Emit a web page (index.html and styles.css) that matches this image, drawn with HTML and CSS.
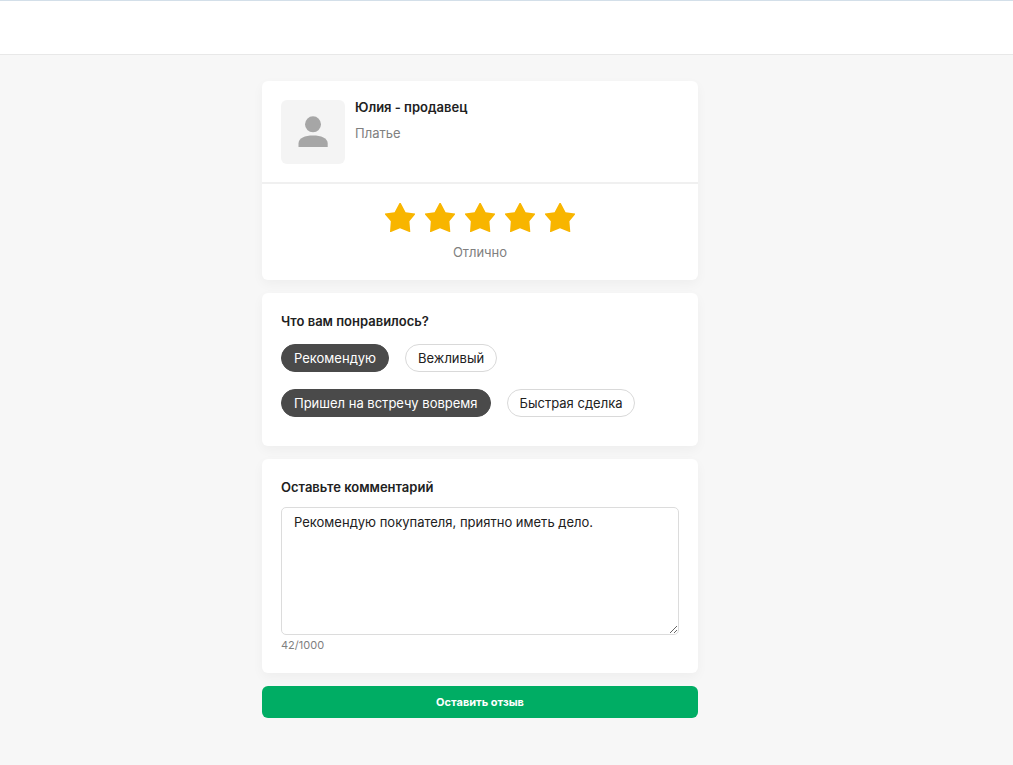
FILE: index.html
```html
<!DOCTYPE html>
<html lang="ru">
<head>
<meta charset="utf-8">
<meta name="viewport" content="width=device-width, initial-scale=1">
<title>Оставить отзыв</title>
<link rel="stylesheet" href="styles.css">
</head>
<body>
<svg class="sprite" aria-hidden="true">
  <symbol id="star" viewBox="0 0 30 30"><path d="M14.500 0h1.200L20.600 9.200 30 10.400v1.200L24.400 18.200 25.300 29h-1L15 25.300 6 29H5L5.800 18.200 0 11.600v-1.200L9.600 9.200Z"/></symbol>
</svg>
<header class="topbar"></header>
<main class="page">
  <form class="review">
    <section class="card">
      <div class="seller">
        <div class="avatar">
          <svg viewBox="0 0 64 64" aria-hidden="true"><circle cx="32" cy="24.300" r="8"/><path d="M17.500 47v-3.500C17.500 38 24 35.500 32 35.500s14.700 2.500 14.700 8V47Z"/></svg>
        </div>
        <div>
          <h1 class="title">Юлия - продавец</h1>
          <p class="muted product">Платье</p>
        </div>
      </div>
      <div class="rating">
        <div class="stars" role="radiogroup" aria-label="Оценка">
          <label class="star"><input type="radio" name="rating" value="1" aria-label="1"><svg><use href="#star"/></svg></label>
          <label class="star"><input type="radio" name="rating" value="2" aria-label="2"><svg><use href="#star"/></svg></label>
          <label class="star"><input type="radio" name="rating" value="3" aria-label="3"><svg><use href="#star"/></svg></label>
          <label class="star"><input type="radio" name="rating" value="4" aria-label="4"><svg><use href="#star"/></svg></label>
          <label class="star"><input type="radio" name="rating" value="5" aria-label="5" checked><svg><use href="#star"/></svg></label>
        </div>
        <p class="muted">Отлично</p>
      </div>
    </section>

    <section class="card padded liked">
      <h2 class="title">Что вам понравилось?</h2>
      <div class="chips">
        <label class="chip"><input type="checkbox" checked><span>Рекомендую</span></label>
        <label class="chip"><input type="checkbox"><span>Вежливый</span></label>
        <label class="chip"><input type="checkbox" checked><span>Пришел на встречу вовремя</span></label>
        <label class="chip"><input type="checkbox"><span>Быстрая сделка</span></label>
      </div>
    </section>

    <section class="card padded">
      <label class="title" for="comment">Оставьте комментарий</label>
      <textarea class="comment" id="comment" maxlength="1000" spellcheck="false">Рекомендую покупателя, приятно иметь дело.</textarea>
      <p class="counter">42/1000</p>
    </section>

    <button class="submit" type="submit">Оставить отзыв</button>
  </form>
</main>
</body>
</html>
```
FILE: styles.css
```css
* {
  box-sizing: border-box;
}

body {
  margin: 0;
  min-height: 100vh;
  background: #f7f7f7;
  color: #212121;
  font: 13px/20px Inter, "Liberation Sans", sans-serif;
}

h1, h2, p {
  margin: 0;
}

.sprite {
  display: none;
}

.topbar {
  height: 55px;
  background: #fff;
  border-top: 1px solid #d3dfe9;
  border-bottom: 1px solid #e8e8e8;
}

.page {
  max-width: 960px;
  padding: 26px 16px;
}

.review {
  display: flex;
  flex-direction: column;
  gap: 13px;
  max-width: 436px;
  margin: 0 auto;
}

.card {
  background: #fff;
  border-radius: 6px;
  box-shadow: 0 4px 12px rgba(0, 0, 0, 0.04);
}

.padded {
  padding: 18px 19px;
}

.title {
  display: block;
  font-size: 13px;
  font-weight: 600;
  line-height: 20px;
}

.muted {
  color: #808080;
}

.seller {
  display: flex;
  gap: 10px;
  padding: 19px 19px 18px;
  border-bottom: 2px solid #f0f0f0;
}

.seller .title {
  line-height: 14px;
}

.product {
  margin-top: 9px;
}

.avatar {
  width: 64px;
  height: 64px;
  border-radius: 6px;
  background: #f4f4f4;
  fill: #a6a6a6;
}

.avatar svg {
  display: block;
}

.rating {
  padding: 19px 19px 18px;
  text-align: center;
}

.stars {
  display: flex;
  justify-content: center;
  gap: 10px;
  margin-bottom: 9px;
}

.star {
  position: relative;
  cursor: pointer;
}

.star svg {
  display: block;
  width: 30px;
  height: 30px;
  fill: #f8b500;
}

.star input,
.chip input {
  position: absolute;
  inset: 0;
  margin: 0;
  opacity: 0;
}

.liked {
  padding-bottom: 29px;
}

.chips {
  display: flex;
  flex-wrap: wrap;
  gap: 17px 16px;
  margin-top: 13px;
}

.chip {
  position: relative;
  cursor: pointer;
}

.chip span {
  display: block;
  padding: 3px 12px;
  border: 1px solid #d9d9d9;
  border-radius: 15px;
}

.chip input:checked + span {
  border-color: #4a4a4a;
  background: #4a4a4a;
  color: #fff;
}

.comment {
  display: block;
  width: 100%;
  height: 128px;
  margin-top: 10px;
  padding: 4px 12px;
  border: 1px solid #dcdcdc;
  border-radius: 5px;
  background: #fff;
  color: inherit;
  font: inherit;
  resize: vertical;
}

.counter {
  color: #808080;
  font-size: 11px;
}

.submit {
  height: 32px;
  border: 0;
  border-radius: 6px;
  background: #00ad64;
  color: #fff;
  font: 700 11px/16px Inter, "Liberation Sans", sans-serif;
  cursor: pointer;
}
```
